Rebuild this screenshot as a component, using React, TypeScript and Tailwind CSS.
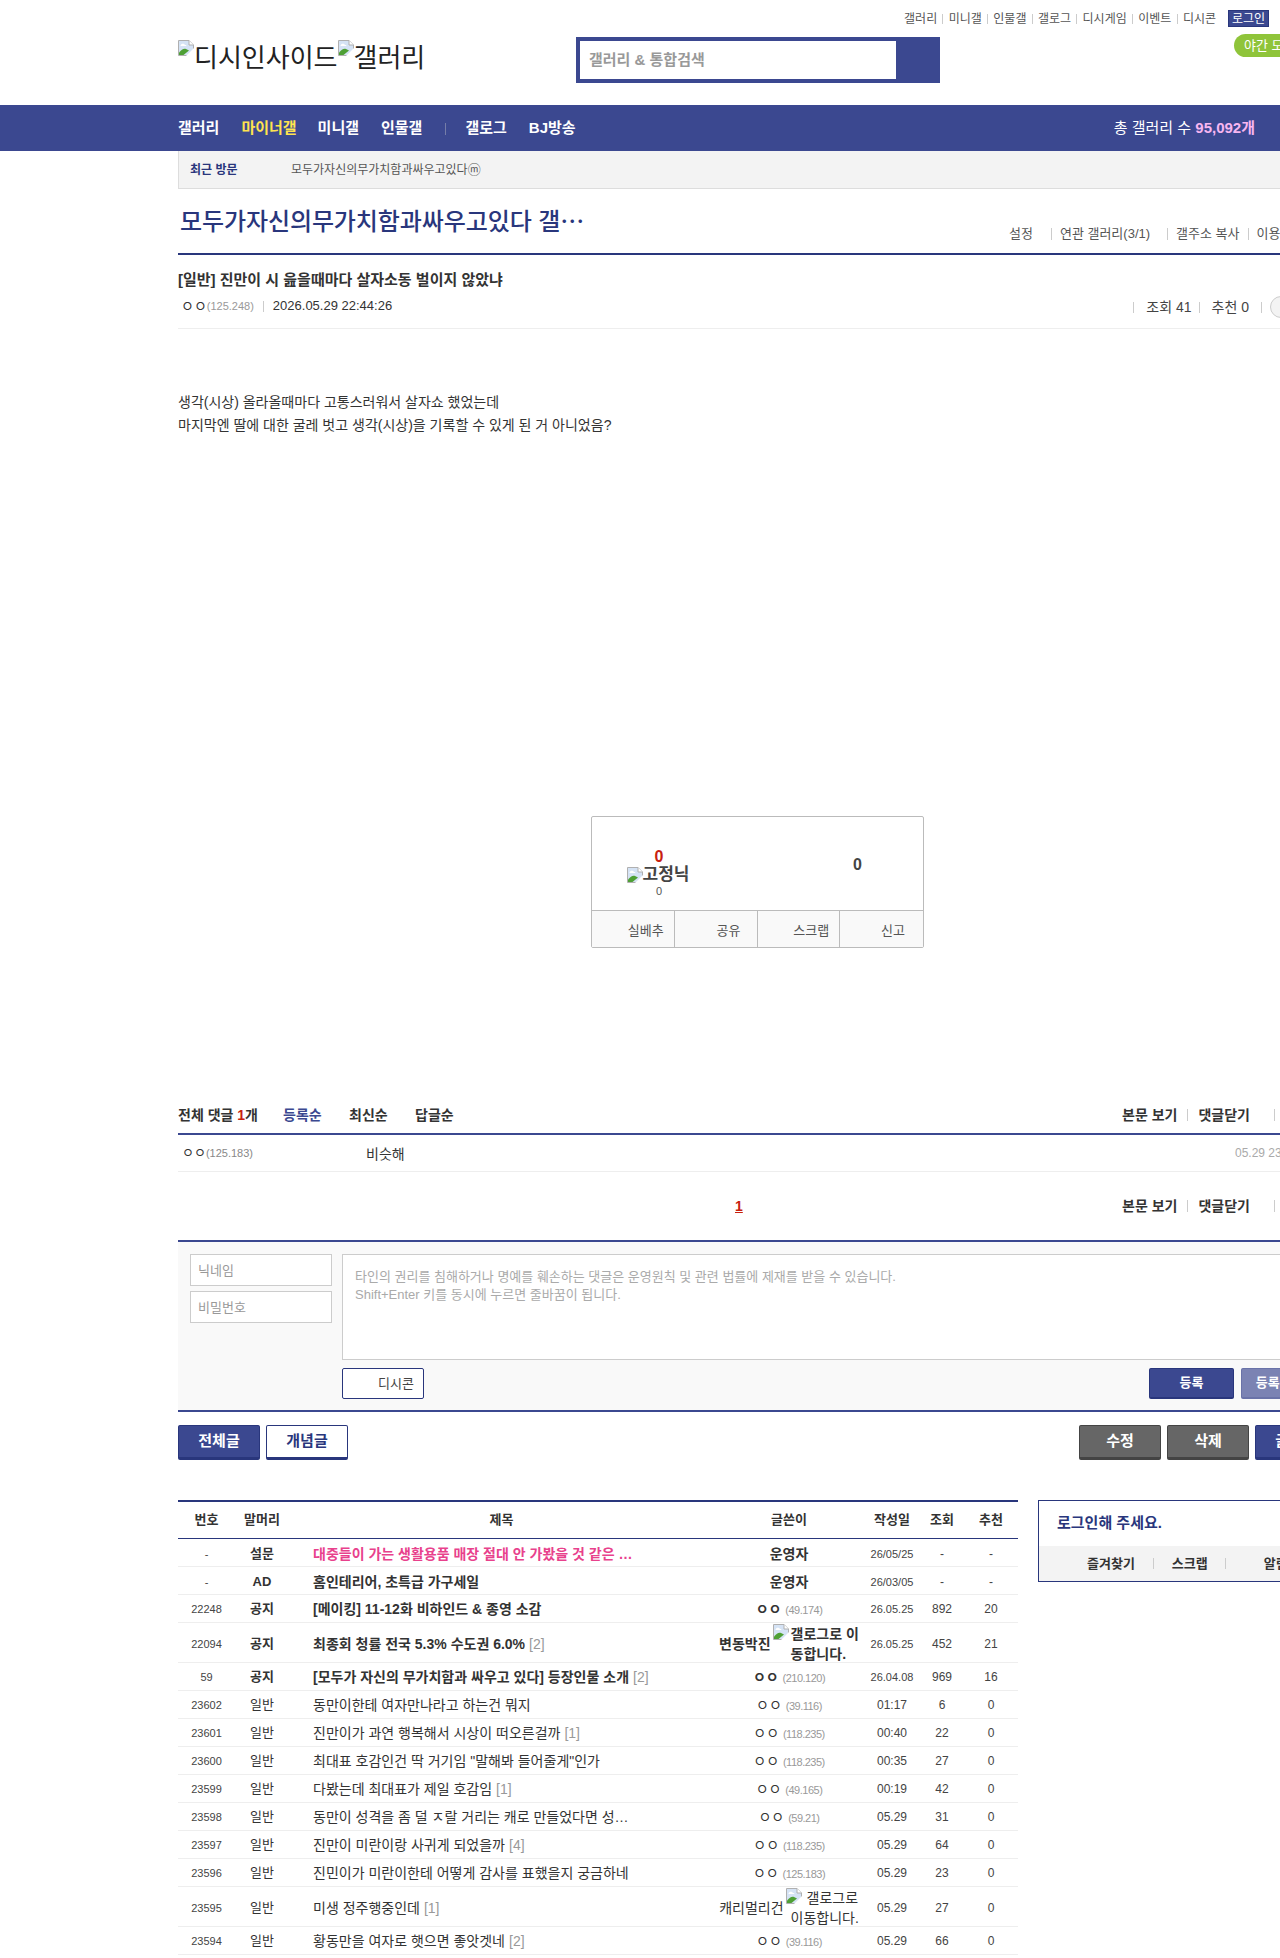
import type { ReactNode } from "react";

const topLinks = ["갤러리", "미니갤", "인물갤", "갤로그", "디시게임", "이벤트", "디시콘"];

type Row = {
  no: string;
  head: string;
  title: string;
  count?: string;
  nick?: string;
  ip?: string;
  alt?: [string, string];
  altIndent?: string;
  date: string;
  views: string;
  rec: string;
  bold?: boolean;
  pink?: boolean;
  tall?: boolean;
  dark?: boolean;
};

const rows: Row[] = [
  { no: "-", head: "설문", title: "대중들이 가는 생활용품 매장 절대 안 가봤을 것 같은 …", nick: "운영자", date: "26/05/25", views: "-", rec: "-", bold: true, pink: true },
  { no: "-", head: "AD", title: "홈인테리어, 초특급 가구세일", nick: "운영자", date: "26/03/05", views: "-", rec: "-", bold: true },
  { no: "22248", head: "공지", title: "[메이킹] 11-12화 비하인드 & 종영 소감", ip: "(49.174)", date: "26.05.25", views: "892", rec: "20", bold: true, dark: true },
  { no: "22094", head: "공지", title: "최종회 청률 전국 5.3% 수도권 6.0%", count: "[2]", nick: "변동박진", alt: ["갤로그로 이", "동합니다."], altIndent: "pl-[18px]", date: "26.05.25", views: "452", rec: "21", bold: true, tall: true },
  { no: "59", head: "공지", title: "[모두가 자신의 무가치함과 싸우고 있다] 등장인물 소개", count: "[2]", ip: "(210.120)", date: "26.04.08", views: "969", rec: "16", bold: true, dark: true },
  { no: "23602", head: "일반", title: "동만이한테 여자만나라고 하는건 뭐지", ip: "(39.116)", date: "01:17", views: "6", rec: "0" },
  { no: "23601", head: "일반", title: "진만이가 과연 행복해서 시상이 떠오른걸까", count: "[1]", ip: "(118.235)", date: "00:40", views: "22", rec: "0" },
  { no: "23600", head: "일반", title: "최대표 호감인건 딱 거기임 \"말해봐 들어줄게\"인가", ip: "(118.235)", date: "00:35", views: "27", rec: "0" },
  { no: "23599", head: "일반", title: "다봤는데 최대표가 제일 호감임", count: "[1]", ip: "(49.165)", date: "00:19", views: "42", rec: "0" },
  { no: "23598", head: "일반", title: "동만이 성격을 좀 덜 ㅈ랄 거리는 캐로 만들었다면 성…", ip: "(59.21)", date: "05.29", views: "31", rec: "0" },
  { no: "23597", head: "일반", title: "진만이 미란이랑 사귀게 되었을까", count: "[4]", ip: "(118.235)", date: "05.29", views: "64", rec: "0" },
  { no: "23596", head: "일반", title: "진민이가 미란이한테 어떻게 감사를 표했을지 궁금하네", ip: "(125.183)", date: "05.29", views: "23", rec: "0" },
  { no: "23595", head: "일반", title: "미생 정주행중인데", count: "[1]", nick: "캐리멀리건", alt: ["갤로그로", "이동합니다."], altIndent: "pl-[5px]", date: "05.29", views: "27", rec: "0", tall: true },
  { no: "23594", head: "일반", title: "황동만을 여자로 햇으면 좋앗겟네", count: "[2]", ip: "(39.116)", date: "05.29", views: "66", rec: "0" },
];

function BrokenImage() {
  return (
    <svg width="16" height="16" viewBox="0 0 16 16" className="inline-block shrink-0 align-top">
      <path d="M.5.5h10.500l4.500 4.500v5L10 15.500H.5z" fill="#d5e3f5" stroke="#b0b0b0" />
      <path d="M11 .5V5h4.500" fill="#fff" stroke="#b0b0b0" />
      <path d="M2.500 5.500c.5-2 3.500-2.500 4.500-.5 1 0 1.500.5 1.500 1h-6z" fill="#fff" />
      <path d="M1 15v-2.500c2.500-3 5-4.500 7-3.500l3 1.500L5.500 15z" fill="#4ea035" />
      <path d="M8 16l8-8v8z" fill="#fff" />
    </svg>
  );
}

function Sep({ className = "h-[11px]" }: { className?: string }) {
  return <span className={`w-px bg-[#ccc] ${className}`} />;
}

function Ip({ ip, dark }: { ip: string; dark?: boolean }) {
  return (
    <span className={`whitespace-nowrap text-[14px] ${dark ? "font-bold" : ""} text-[#333]`}>
      ㅇㅇ <span className="text-[11px] font-normal tracking-[-0.5px] text-[#999]">{ip}</span>
    </span>
  );
}

function BoardRow({ row }: { row: Row }) {
  return (
    <div
      className={`grid grid-cols-[57px_54px_425px_150px_56px_44px_54px] items-center border-b border-[#eee] text-center text-[11px] text-[#444] ${
        row.tall ? "h-[40px]" : "h-[28px]"
      } ${row.no === "-" ? "pt-[3px]" : "pt-[1px]"}`}
    >
      <div>{row.no}</div>
      <div className={`text-[13px] text-[#333] ${row.bold ? "font-bold" : ""}`}>{row.head}</div>
      <div
        className={`whitespace-nowrap pl-[24px] text-left text-[14px] ${row.bold ? "font-bold" : ""} ${
          row.pink ? "text-[#e8418c]" : "text-[#333]"
        }`}
      >
        {row.title}
        {row.count && <span className="ml-[4px] text-[14px] font-normal text-[#999]">{row.count}</span>}
      </div>
      <div className="flex items-center justify-center">
        {row.ip ? (
          <Ip ip={row.ip} dark={row.dark} />
        ) : row.alt ? (
          <>
            <span className={`whitespace-nowrap text-[14px] ${row.bold ? "font-bold" : ""} text-[#333]`}>{row.nick}</span>
            <span className={`ml-[2px] text-left text-[14px] leading-[20px] text-[#333] ${row.bold ? "font-bold" : ""}`}>
              <span className="flex whitespace-nowrap">
                <BrokenImage />
                <span className={row.bold ? "ml-[2px]" : "ml-[5px]"}>{row.alt[0]}</span>
              </span>
              <span className={`block whitespace-nowrap ${row.altIndent}`}>{row.alt[1]}</span>
            </span>
          </>
        ) : (
          <span className="text-[14px] font-bold text-[#333]">{row.nick}</span>
        )}
      </div>
      <div className={row.date.length < 6 ? "text-[12px]" : ""}>{row.date}</div>
      <div className={row.date.length < 9 ? "text-[12px]" : ""}>{row.views}</div>
      <div className={row.date.length < 9 ? "text-[12px]" : ""}>{row.rec}</div>
    </div>
  );
}

function BoardButton({ children, tone, className = "" }: { children: ReactNode; tone: "blue" | "white" | "gray"; className?: string }) {
  const tones = {
    blue: "border-[#29367c] bg-[#3b4890] text-white",
    white: "border-[#29367c] bg-white text-[#29367c]",
    gray: "border-[#444] bg-[#666] text-white",
  };
  return (
    <button className={`h-[35px] rounded-[2px] border border-b-[3px] text-[15px] font-bold ${tones[tone]} ${className}`}>
      {children}
    </button>
  );
}

function CommentTools() {
  return (
    <div className="ml-auto flex items-center text-[14px] font-bold text-[#333]">
      <span>본문 보기</span>
      <Sep className="mx-[10px] h-[12px]" />
      <span>댓글닫기</span>
      <Sep className="ml-[24px] h-[12px]" />
      <span className="ml-[10px] w-[53px]" />
    </div>
  );
}

function RecCell({ label, className }: { label: string; className: string }) {
  return <div className={`flex items-center justify-end pt-[3px] text-[13px] text-[#555] ${className}`}>{label}</div>;
}

export default function App() {
  return (
    <div className="relative h-[1958px] w-full overflow-hidden bg-white font-['Liberation_Sans','Noto_Sans_CJK_KR',sans-serif] text-[#333]">
      <header className="h-[105px]">
        <div className="flex h-[37px] w-[1269px] items-start justify-end pt-[10px] text-[12px] text-[#555]">
          <div className="flex h-[17px] items-center">
            {topLinks.map((link, i) => (
              <span key={link} className="flex items-center">
                {i > 0 && <Sep className="mx-[5.25px] h-[10px]" />}
                {link}
              </span>
            ))}
            <span className="ml-[12px] flex h-[17px] w-[41px] items-center justify-center border border-[#29367c] bg-[#3b4890] text-white">
              로그인
            </span>
          </div>
        </div>
        <div className="flex items-start pl-[178px]">
          <div className="flex w-[398px] items-start pt-[3px] text-[26px] leading-[36px] text-[#222]">
            <BrokenImage />
            <span>디시인사이드</span>
            <BrokenImage />
            <span>갤러리</span>
          </div>
          <div className="flex h-[46px] w-[364px] border-[4px] border-[#3b4890] bg-[#3b4890]">
            <input
              placeholder="갤러리 & 통합검색"
              className="w-[316px] bg-white pl-[9px] pt-[1px] text-[15px] font-bold outline-none placeholder:text-[#999]"
            />
          </div>
        </div>
        <div className="absolute left-[1234px] top-[34px] flex h-[23px] w-[90px] items-center rounded-l-full bg-[#8fc43a] pl-[10px] text-[13px] text-white">
          야간 모드
        </div>
      </header>

      <nav className="flex h-[46px] items-center bg-[#3b4890] pl-[178px] pt-[1px] text-[15px] font-bold text-white">
        <span>갤러리</span>
        <span className="ml-[22px] text-[#ffe34f]">마이너갤</span>
        <span className="ml-[21px]">미니갤</span>
        <span className="ml-[22px]">인물갤</span>
        <Sep className="ml-[23px] h-[12px] opacity-40" />
        <span className="ml-[19px]">갤로그</span>
        <span className="ml-[22px]">BJ방송</span>
        <span className="ml-auto mr-[25px] font-normal">
          총 갤러리 수 <b className="text-[#f7b6f0]">95,092</b>
          <b className="text-[#f7b6f0]">개</b>
        </span>
      </nav>

      <main className="ml-[178px] w-[1160px]">
        <div className="flex h-[38px] items-center border-b border-l border-[#ddd] bg-[#f3f3f3] pl-[11px] pt-[1px] text-[12px]">
          <span className="w-[101px] font-bold text-[#29367c]">최근 방문</span>
          <span className="text-[#555]">모두가자신의무가치함과싸우고있다<span className="text-[13px]">ⓜ</span></span>
        </div>

        <div className="flex h-[66px] items-start border-b-2 border-[#29367c] pt-[15px]">
          <h2 className="pl-[2px] text-[24px] font-medium leading-[36px] tracking-[-0.1px] text-[#29367c]">모두가자신의무가치함과싸우고있다 갤⋯</h2>
          <div className="absolute left-[1009px] top-[226px] flex h-[15px] items-center whitespace-nowrap text-[13px] text-[#555]">
            <span>설정</span>
            <Sep className="ml-[18px] mr-[8px] h-[12px]" />
            <span>연관 갤러리(3/1)</span>
            <Sep className="ml-[17px] mr-[8px] h-[12px]" />
            <span>갤주소 복사</span>
            <Sep className="mx-[8px] h-[12px]" />
            <span>이용 안내</span>
          </div>
        </div>

        <div className="h-[74px] border-b border-[#eee] pt-[15px]">
          <h3 className="text-[15px] font-bold leading-[20px] text-[#333]">[일반] 진만이 시 읊을때마다 살자소동 벌이지 않았냐</h3>
          <div className="mt-[4px] flex items-center pl-[3px] text-[13px]">
            <span className="text-[14px] text-[#333]">ㅇㅇ</span>
            <span className="text-[11px] text-[#999]">(125.248)</span>
            <Sep className="mx-[9px] h-[11px]" />
            <span className="text-[#333]">2026.05.29 22:44:26</span>
            <div className="ml-auto mt-[2px] flex items-center text-[14px] text-[#444]">
              <Sep className="mr-[12px] h-[11px]" />
              <span>조회 41</span>
              <Sep className="ml-[7px] mr-[12px] h-[11px]" />
              <span>추천 0</span>
              <Sep className="ml-[12px] mr-[8px] h-[11px]" />
              <span className="h-[22px] w-[68px] rounded-full border border-[#ccc] bg-[#f3f3f3]" />
            </div>
          </div>
        </div>

        <div className="pt-[62px] text-[14px] leading-[23px] text-[#333]">
          <p>생각(시상) 올라올때마다 고통스러워서 살자쇼 했었는데</p>
          <p>마지막엔 딸에 대한 굴레 벗고 생각(시상)을 기록할 수 있게 된 거 아니었음?</p>
        </div>

        <div className="ml-[413px] mt-[379px] h-[132px] w-[333px] rounded-[2px] border border-[#bbb]">
          <div className="flex h-[93px]">
            <div className="flex w-[134px] flex-col items-center pt-[31px]">
              <div className="text-[16px] font-bold leading-[18px] text-[#c8200f]">0</div>
              <div className="-ml-[2px] flex h-[18px] items-center text-[17px] font-bold text-[#444]">
                <BrokenImage />
                <span>고정닉</span>
              </div>
              <div className="text-[11px] leading-[14px] text-[#555]">0</div>
            </div>
            <div className="pl-[127px] pt-[39px] text-[16px] font-bold leading-[18px] text-[#444]">0</div>
          </div>
          <div className="grid h-[37px] grid-cols-4 border-t border-[#bbb] bg-[#f9f9f9]">
            <RecCell label="실베추" className="border-r border-[#bbb] pr-[10px]" />
            <RecCell label="공유" className="border-r border-[#bbb] pr-[16px]" />
            <RecCell label="스크랩" className="border-r border-[#bbb] pr-[10px]" />
            <RecCell label="신고" className="pr-[18px]" />
          </div>
        </div>

        <div className="mt-[152px] flex h-[35px] items-center border-b-2 border-[#3b4890] pb-[3px] text-[14px] font-bold">
          <span className="w-[105px]">
            전체 댓글 <span className="text-[#c8200f]">1</span>개
          </span>
          <span className="w-[66px] text-[#3b4890]">등록순</span>
          <span className="w-[66px]">최신순</span>
          <span>답글순</span>
          <CommentTools />
        </div>

        <div className="flex h-[37px] items-center border-b border-[#eee] whitespace-nowrap">
          <div className="w-[188px] pl-[4px] text-[13px]">
            ㅇㅇ<span className="text-[11px] text-[#888]">(125.183)</span>
          </div>
          <div className="flex-1 pt-[2px] text-[14px]">비슷해</div>
          <div className="w-[103px] text-[12px] text-[#aaa]">05.29 23:31:07</div>
        </div>

        <div className="flex h-[70px] items-center border-b-2 border-[#3b4890]">
          <span className="ml-[557px] text-[14px] font-bold text-[#c8200f] underline">1</span>
          <CommentTools />
        </div>

        <form className="h-[170px] border-b-2 border-[#3b4890] bg-[#f9f9f9] pl-[12px] pt-[12px]">
          <div className="flex">
            <div className="flex w-[152px] flex-col gap-[5px]">
              <input placeholder="닉네임" className="h-[32px] w-[142px] border border-[#ccc] bg-white pl-[7px] text-[13px] placeholder:text-[#999]" />
              <input placeholder="비밀번호" className="h-[32px] w-[142px] border border-[#ccc] bg-white pl-[7px] text-[13px] placeholder:text-[#999]" />
            </div>
            <textarea
              className="h-[106px] w-[984px] resize-none border border-[#ccc] bg-white px-[12px] py-[13px] text-[13px] leading-[18px] placeholder:text-[#aaa]"
              placeholder={"타인의 권리를 침해하거나 명예를 훼손하는 댓글은 운영원칙 및 관련 법률에 제재를 받을 수 있습니다.\nShift+Enter 키를 동시에 누르면 줄바꿈이 됩니다."}
            />
          </div>
          <div className="mt-[8px] flex pl-[152px]">
            <button type="button" className="h-[31px] w-[82px] rounded-[2px] border border-[#29367c] bg-white pl-[26px] text-[13px] text-[#444]">
              디시콘
            </button>
            <button type="button" className="ml-[725px] h-[31px] w-[85px] rounded-[2px] border border-b-[2px] border-[#29367c] bg-[#3b4890] text-[13px] font-bold text-white">
              등록
            </button>
            <button type="button" className="ml-[7px] h-[31px] w-[85px] rounded-[2px] border border-b-[2px] border-[#6a73a8] bg-[#7b83b3] text-[13px] font-bold text-white">
              등록+추천
            </button>
          </div>
        </form>

        <div className="mt-[13px] flex">
          <BoardButton tone="blue" className="w-[82px]">전체글</BoardButton>
          <BoardButton tone="white" className="ml-[6px] w-[82px]">개념글</BoardButton>
          <BoardButton tone="gray" className="ml-[731px] w-[82px]">수정</BoardButton>
          <BoardButton tone="gray" className="ml-[6px] w-[82px]">삭제</BoardButton>
          <BoardButton tone="blue" className="ml-[6px] w-[82px]">글쓰기</BoardButton>
        </div>

        <div className="mt-[40px] flex items-start">
          <section className="w-[840px] border-t-2 border-[#29367c]">
            <div className="grid h-[37px] grid-cols-[57px_54px_425px_150px_56px_44px_54px] items-center border-b border-[#29367c] text-center text-[13px] font-bold text-[#333]">
              <div>번호</div>
              <div>말머리</div>
              <div>제목</div>
              <div>글쓴이</div>
              <div>작성일</div>
              <div>조회</div>
              <div>추천</div>
            </div>
            {rows.map((row) => (
              <BoardRow key={row.no + row.title} row={row} />
            ))}
          </section>

          <aside className="ml-[20px] w-[300px] border border-[#29367c]">
            <div className="flex h-[45px] items-center pl-[18px] text-[15px] font-bold text-[#29367c]">로그인해 주세요.</div>
            <div className="flex h-[35px] items-center bg-[#f3f3f3] text-[13px] font-bold text-[#333]">
              <span className="ml-[48px]">즐겨찾기</span>
              <Sep className="mx-[18px] h-[11px]" />
              <span>스크랩</span>
              <Sep className="ml-[17px] mr-[38px] h-[11px]" />
              <span>알림</span>
            </div>
          </aside>
        </div>
      </main>
    </div>
  );
}
